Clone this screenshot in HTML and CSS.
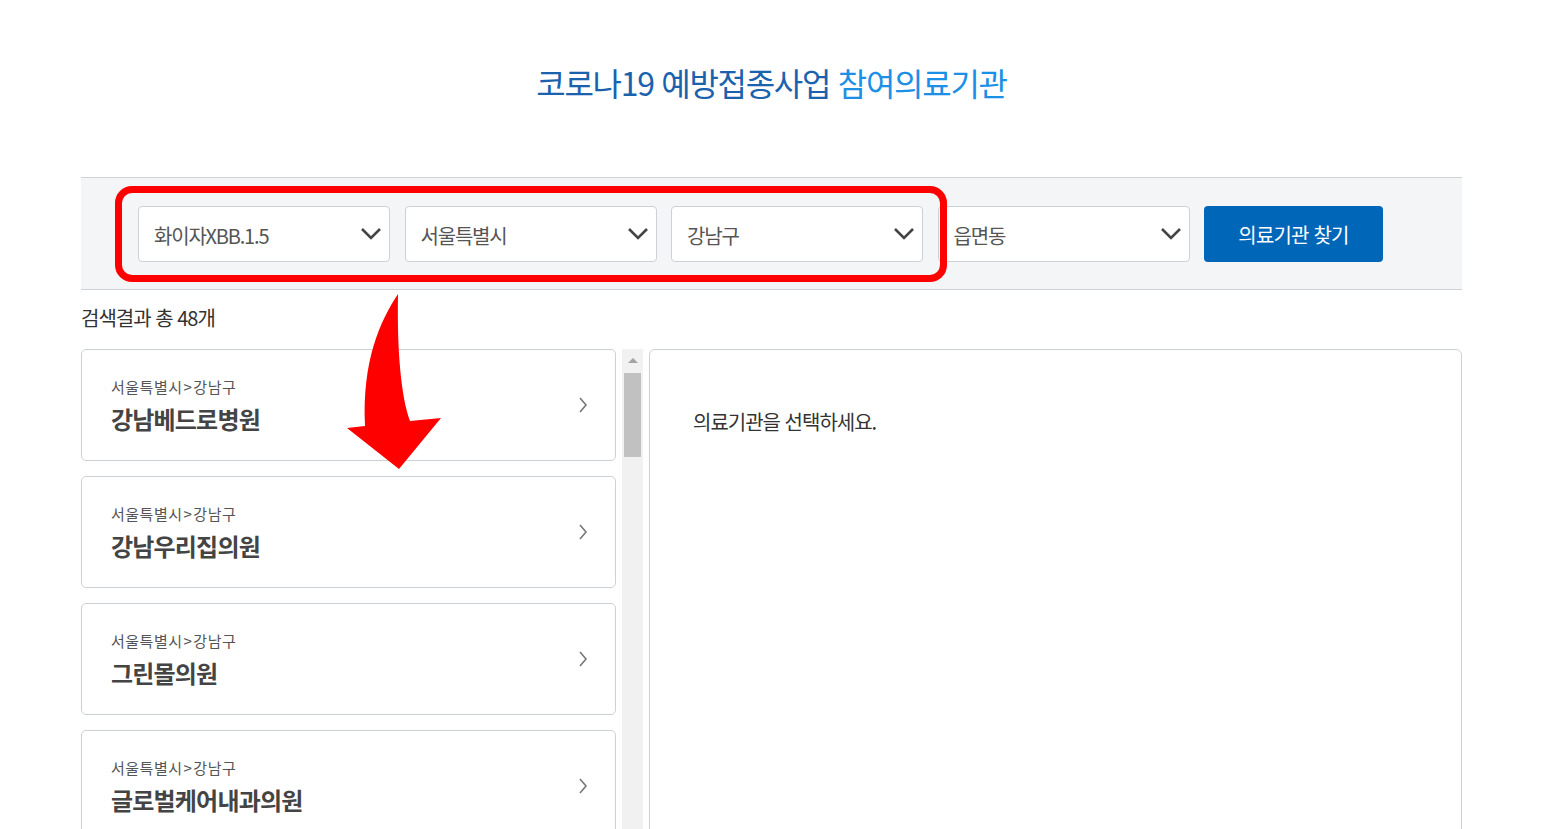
FILE: index.html
```html
<!DOCTYPE html>
<html lang="ko">
<head>
<meta charset="utf-8">
<title>코로나19 예방접종사업 참여의료기관</title>
<link rel="stylesheet" href="styles.css">
</head>
<body>
<div class="page">
  <h1 class="title"><span class="t-dark">코로나19 예방접종사업</span> <span class="t-light">참여의료기관</span></h1>

  <div class="search-bar">
    <div class="select"><span>화이자XBB.1.5</span><svg class="chev" viewBox="0 0 22 14"><path d="M2 2 L11 11 L20 2"/></svg></div>
    <div class="select"><span>서울특별시</span><svg class="chev" viewBox="0 0 22 14"><path d="M2 2 L11 11 L20 2"/></svg></div>
    <div class="select"><span>강남구</span><svg class="chev" viewBox="0 0 22 14"><path d="M2 2 L11 11 L20 2"/></svg></div>
    <div class="select"><span>읍면동</span><svg class="chev" viewBox="0 0 22 14"><path d="M2 2 L11 11 L20 2"/></svg></div>
    <button class="find-btn">의료기관 찾기</button>
    <div class="highlight"></div>
  </div>

  <p class="count">검색결과 총 48개</p>

  <div class="results">
    <div class="list-wrap">
      <ul class="list">
        <li class="card"><div class="card-text"><p class="region">서울특별시<span class="gt">&gt;</span>강남구</p><p class="name">강남베드로병원</p></div><svg class="arrow-r" viewBox="0 0 10 18"><path d="M2 2 L8 9 L2 16"/></svg></li>
        <li class="card"><div class="card-text"><p class="region">서울특별시<span class="gt">&gt;</span>강남구</p><p class="name">강남우리집의원</p></div><svg class="arrow-r" viewBox="0 0 10 18"><path d="M2 2 L8 9 L2 16"/></svg></li>
        <li class="card"><div class="card-text"><p class="region">서울특별시<span class="gt">&gt;</span>강남구</p><p class="name">그린몰의원</p></div><svg class="arrow-r" viewBox="0 0 10 18"><path d="M2 2 L8 9 L2 16"/></svg></li>
        <li class="card"><div class="card-text"><p class="region">서울특별시<span class="gt">&gt;</span>강남구</p><p class="name">글로벌케어내과의원</p></div><svg class="arrow-r" viewBox="0 0 10 18"><path d="M2 2 L8 9 L2 16"/></svg></li>
      </ul>
      <div class="scrollbar">
        <div class="sb-up"></div>
        <div class="sb-thumb"></div>
      </div>
      <svg class="red-arrow" viewBox="0 0 100 180"><path d="M51 3 C33 30 15 70 18 135 L0 137 L52 178 L94 127 L63 130 C54 105 50 60 51 3 Z"/></svg>
    </div>
    <div class="detail">
      <p class="detail-msg">의료기관을 선택하세요.</p>
    </div>
  </div>
</div>
</body>
</html>
```
FILE: styles.css
```css
* { box-sizing: border-box; }
html, body { margin: 0; padding: 0; overflow: hidden; background: #fff; }
body {
  font-family: "Noto Sans CJK KR", "Noto Sans", "Liberation Sans", sans-serif;
  color: #333;
  width: 1560px;
  height: 829px;
}
.page {
  width: 1381px;
  margin-left: 81px;
}
.title {
  margin: 0;
  padding-top: 58px;
  height: 177px;
  text-align: center;
  font-size: 32px;
  font-weight: 400;
  letter-spacing: -1.3px;
  line-height: 48px;
}
.t-dark { color: #1a62ad; }
.t-light { color: #1c8fe6; }

.search-bar {
  position: relative;
  height: 113px;
  background: #f4f5f7;
  border-top: 1px solid #cfd1d6;
  border-bottom: 1px solid #cfd1d6;
  display: flex;
  align-items: center;
  padding-left: 57px;
  gap: 14.5px;
}
.select {
  width: 252px;
  height: 56px;
  background: #fff;
  border: 1px solid #cdd0d5;
  border-radius: 4px;
  display: flex;
  align-items: center;
  justify-content: space-between;
  padding: 3px 7px 0 15px;
  font-size: 20px;
  color: #555;
  letter-spacing: -1.2px;
}
.chev { width: 22px; height: 14px; margin-top: -3px; }
.chev path { fill: none; stroke: #444; stroke-width: 2.6; }
.find-btn {
  width: 179px;
  height: 56px;
  border: none;
  border-radius: 4px;
  background: #0066b8;
  color: #fff;
  font-family: inherit;
  font-size: 20px;
  letter-spacing: -0.8px;
  padding-top: 2px;
}
.highlight {
  position: absolute;
  left: 34px;
  top: 8px;
  width: 832px;
  height: 96px;
  border: 7px solid #ff0000;
  border-radius: 17px;
  pointer-events: none;
}

.count {
  margin: 0;
  height: 59px;
  padding-top: 13px;
  font-size: 20px;
  letter-spacing: -1px;
  color: #333;
  line-height: 30px;
}

.results {
  display: flex;
  gap: 6px;
  align-items: flex-start;
}
.list-wrap {
  position: relative;
  display: flex;
  gap: 6px;
}
.list {
  list-style: none;
  margin: 0;
  padding: 0;
  width: 535px;
  display: flex;
  flex-direction: column;
  gap: 15px;
}
.card {
  height: 112px;
  border: 1px solid #cdd0d5;
  border-radius: 5px;
  display: flex;
  align-items: center;
  justify-content: space-between;
  padding: 0 27px 0 29px;
}
.card-text { margin-top: 2px; }
.card-text p { margin: 0; }
.region {
  font-size: 15px;
  color: #555;
  letter-spacing: 0.5px;
  line-height: 22px;
  margin-bottom: 4px !important;
}
.gt { margin: 0 1px; }
.name {
  font-size: 24px;
  font-weight: 700;
  color: #444;
  letter-spacing: -0.8px;
  line-height: 34px;
}
.arrow-r { width: 10px; height: 18px; }
.arrow-r path { fill: none; stroke: #777; stroke-width: 1.6; }

.scrollbar {
  width: 21px;
  height: 480px;
  background: #f1f1f1;
  display: flex;
  flex-direction: column;
  align-items: center;
}
.sb-up {
  margin-top: 9px;
  width: 0;
  height: 0;
  border-left: 5px solid transparent;
  border-right: 5px solid transparent;
  border-bottom: 5px solid #a3a3a3;
}
.sb-thumb {
  margin-top: 10px;
  width: 17px;
  height: 84px;
  background: #c1c1c1;
}
.red-arrow {
  position: absolute;
  left: 266px;
  top: -58px;
  width: 100px;
  height: 180px;
}
.red-arrow path { fill: #ff0000; }

.detail {
  flex: 1;
  height: 520px;
  border: 1px solid #cdd0d5;
  border-radius: 6px;
  padding: 56px 0 0 43px;
}
.detail-msg {
  margin: 0;
  font-size: 20px;
  color: #333;
  letter-spacing: -1px;
  line-height: 32px;
}
```
